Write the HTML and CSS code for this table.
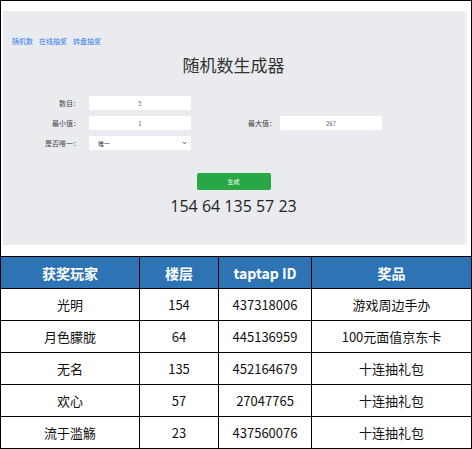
FILE: index.html
```html
<!DOCTYPE html>
<html lang="zh-CN">
<head>
<meta charset="utf-8">
<title>随机数生成器</title>
<link rel="stylesheet" href="styles.css">
</head>
<body>
<div class="page">
  <div class="shot">
    <div class="panel">
      <nav class="nav">
        <a href="#">随机数</a>
        <a href="#">在线抽奖</a>
        <a href="#">转盘抽奖</a>
      </nav>
      <h1 class="title">随机数生成器</h1>
      <div class="form">
        <label class="lbl">数目：</label>
        <input class="field" type="text" value="5">
        <span></span><span></span>
        <label class="lbl">最小值：</label>
        <input class="field" type="text" value="1">
        <label class="lbl lbl-2">最大值：</label>
        <input class="field" type="text" value="267">
        <label class="lbl">是否唯一：</label>
        <div class="select">
          <span>唯一</span>
          <svg width="5" height="4" viewBox="0 0 10 7"><path d="M1.5 1.5 L5 5 L8.5 1.5" fill="none" stroke="#444" stroke-width="1.8"/></svg>
        </div>
      </div>
      <div class="actions"><button class="btn" type="button">生成</button></div>
      <div class="result">154 64 135 57 23</div>
    </div>
  </div>
  <table class="prize">
    <thead>
      <tr><th class="c1">获奖玩家</th><th class="c2">楼层</th><th class="c3">taptap ID</th><th class="c4">奖品</th></tr>
    </thead>
    <tbody>
      <tr><td>光明</td><td>154</td><td>437318006</td><td>游戏周边手办</td></tr>
      <tr><td>月色朦胧</td><td>64</td><td>445136959</td><td>100元面值京东卡</td></tr>
      <tr><td>无名</td><td>135</td><td>452164679</td><td>十连抽礼包</td></tr>
      <tr><td>欢心</td><td>57</td><td>27047765</td><td>十连抽礼包</td></tr>
      <tr><td>流于滥觞</td><td>23</td><td>437560076</td><td>十连抽礼包</td></tr>
    </tbody>
  </table>
</div>
</body>
</html>
```
FILE: styles.css
```css
* { box-sizing: border-box; }
html, body { margin: 0; padding: 0; background: #fff; }
body { font-family: "Noto Sans CJK SC", "Noto Sans", sans-serif; }

.page { width: 472px; }

.shot {
  height: 256px;
  border: 1px solid #000;
  border-bottom: none;
  padding: 10px 4px 11px 2px;
  background: #fff;
}

.panel {
  height: 234px;
  background: #e9ebee;
  border-right: 3px solid #eff0f2;
  display: flex;
  flex-direction: column;
}

.nav {
  margin: 26px 0 0 9px;
  display: flex;
  gap: 6px;
  height: 8px;
  line-height: 8px;
  font-size: 7px;
}
.nav a { color: #2f80ed; text-decoration: none; }

.title {
  margin: 10px 0 0;
  height: 20px;
  line-height: 20px;
  font-size: 17px;
  font-weight: 400;
  color: #333;
  text-align: center;
}

.form {
  margin-top: 21px;
  display: grid;
  grid-template-columns: 86px 102px 89px 102px;
  grid-auto-rows: 14px;
  row-gap: 6px;
  align-items: center;
}
.lbl {
  text-align: right;
  padding-right: 9px;
  font-size: 7px;
  line-height: 14px;
  color: #444;
}
.lbl-2 { padding-right: 4px; }

.field {
  width: 102px;
  height: 14px;
  border: none;
  padding: 0;
  margin: 0;
  background: #fff;
  font-family: inherit;
  font-size: 6px;
  color: #666;
  text-align: center;
  outline: none;
}

.select {
  width: 102px;
  height: 14px;
  background: #fff;
  display: flex;
  align-items: center;
  justify-content: space-between;
  padding: 0 4px 0 9px;
  font-size: 6px;
  color: #333;
}
.select svg { display: block; }

.actions {
  margin-top: 23px;
  display: flex;
  justify-content: center;
}
.btn {
  width: 74px;
  height: 17px;
  border: none;
  border-radius: 2px;
  background: #28a745;
  color: #fff;
  font-family: inherit;
  font-size: 6px;
  padding: 0;
}

.result {
  margin-top: 6px;
  text-align: center;
  font-family: "Open Sans", "Noto Sans", sans-serif;
  font-size: 16px;
  line-height: 20px;
  font-weight: 500;
  color: #222;
}

.prize {
  width: 472px;
  table-layout: fixed;
  border-collapse: separate;
  border-spacing: 0;
  border-left: 1px solid #000;
  border-top: 1px solid #000;
  font-size: 13px;
  color: #111;
}
.prize th, .prize td {
  height: 32px;
  padding: 0;
  border-right: 1px solid #000;
  border-bottom: 1px solid #000;
  text-align: center;
  vertical-align: middle;
}
.prize th {
  background: #2e74b5;
  color: #fff;
  font-size: 14px;
  font-weight: 700;
}
.c1 { width: 139px; }
.c2 { width: 79px; }
.c3 { width: 93px; }
.c4 { width: 160px; }
```
